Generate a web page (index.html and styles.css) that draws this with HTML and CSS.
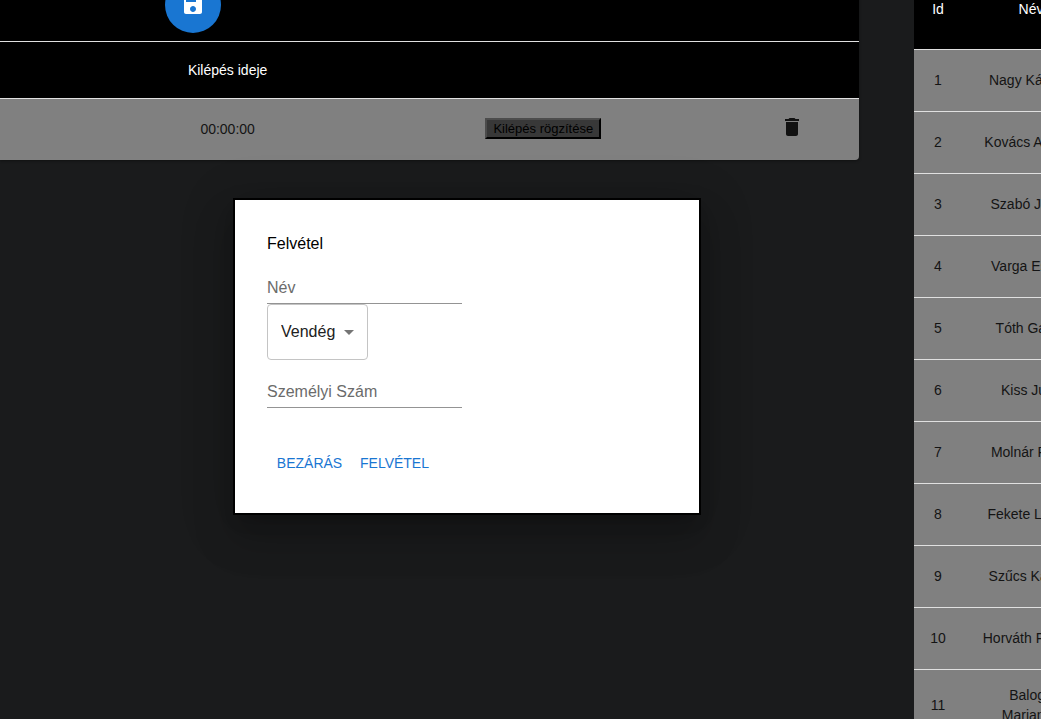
FILE: index.html
```html
<!DOCTYPE html>
<html lang="hu">
<head>
<meta charset="utf-8">
<title>Felvétel</title>
<link rel="stylesheet" href="styles.css">
</head>
<body>
<main class="page">
  <section class="visits">
    <div class="toolbar">
      <button class="fab" type="button" aria-label="Mentés">
        <svg class="icon" viewBox="0 0 24 24" aria-hidden="true"><path d="M17 3H5c-1.110 0-2 .9-2 2v14c0 1.100.890 2 2 2h14c1.100 0 2-.9 2-2V7l-4-4zm-5 16c-1.660 0-3-1.340-3-3s1.340-3 3-3 3 1.340 3 3-1.340 3-3 3zm3-10H5V5h10v4z"/></svg>
      </button>
    </div>
    <table class="table visit-table">
      <colgroup><col class="col-edge"><col class="col-time"><col class="col-action"><col class="col-delete"></colgroup>
      <thead>
        <tr><th></th><th>Kilépés ideje</th><th></th><th></th></tr>
      </thead>
      <tbody>
        <tr>
          <td></td>
          <td>00:00:00</td>
          <td><button class="record" type="button">Kilépés rögzítése</button></td>
          <td><button class="delete" type="button" aria-label="Törlés"><svg class="icon" viewBox="0 0 24 24" aria-hidden="true"><path d="M6 19c0 1.100.9 2 2 2h8c1.100 0 2-.9 2-2V7H6v12zM19 4h-3.500l-1-1h-5l-1 1H5v2h14V4z"/></svg></button></td>
        </tr>
      </tbody>
    </table>
  </section>
  <aside class="people">
    <table class="table people-table">
      <colgroup><col class="col-id"><col class="col-name"></colgroup>
      <thead><tr><th>Id</th><th>Név</th></tr></thead>
      <tbody>
        <tr><td>1</td><td>Nagy Kálmán</td></tr>
        <tr><td>2</td><td>Kovács András</td></tr>
        <tr><td>3</td><td>Szabó János</td></tr>
        <tr><td>4</td><td>Varga Eszter</td></tr>
        <tr><td>5</td><td>Tóth Gábor</td></tr>
        <tr><td>6</td><td>Kiss Judit</td></tr>
        <tr><td>7</td><td>Molnár Péter</td></tr>
        <tr><td>8</td><td>Fekete László</td></tr>
        <tr><td>9</td><td>Szűcs Katalin</td></tr>
        <tr><td>10</td><td>Horváth Ferenc</td></tr>
        <tr><td>11</td><td>Balogh<br>Marianna</td></tr>
      </tbody>
    </table>
  </aside>
</main>

<form class="dialog" role="dialog" aria-labelledby="dialog-title">
  <h2 class="dialog-title" id="dialog-title">Felvétel</h2>
  <input class="field" type="text" placeholder="Név" aria-label="Név">
  <div class="select-wrap">
    <select class="select" aria-label="Típus"><option>Vendég</option></select>
    <svg class="icon arrow" viewBox="0 0 24 24" aria-hidden="true"><path d="M7 10l5 5 5-5z"/></svg>
  </div>
  <input class="field" type="text" placeholder="Személyi Szám" aria-label="Személyi Szám">
  <div class="actions">
    <button class="text-button" type="button">BEZÁRÁS</button>
    <button class="text-button" type="button">FELVÉTEL</button>
  </div>
</form>
</body>
</html>
```

FILE: styles.css
```css
* { box-sizing: border-box; }

body {
  margin: 0;
  min-height: 100vh;
  overflow: hidden;
  background: #1a1b1c;
  font-family: "Liberation Sans", Arial, sans-serif;
  color: #141414;
}

button, input, select { font-family: inherit; }

.icon {
  display: block;
  width: 24px;
  height: 24px;
  fill: currentColor;
}

.page {
  display: flex;
  align-items: flex-start;
  gap: 55px;
  height: 100vh;
  margin-top: -31px;
}

.visits {
  flex: 1;
  border-radius: 0 0 4px 0;
  overflow: hidden;
  box-shadow: 0 1px 3px rgba(0, 0, 0, 0.4);
}

.toolbar {
  padding: 8px 165px;
  background: #000;
  border-bottom: 1px solid #e0e0e0;
}

.fab {
  display: grid;
  place-items: center;
  width: 56px;
  height: 56px;
  padding: 0;
  border: 0;
  border-radius: 50%;
  background: #1976d2;
  color: #fff;
}

.table {
  width: 100%;
  table-layout: fixed;
  border-spacing: 0;
  font-size: 14px;
  line-height: 20px;
  text-align: center;
}

.table th {
  height: 57px;
  padding: 0 16px;
  background: #000;
  color: #fff;
  font-weight: 400;
  border-bottom: 1px solid #e0e0e0;
}

.table td {
  height: 62px;
  padding: 15px 16px 17px;
  background: #808080;
  border-bottom: 1px solid #e0e0e0;
}

.visit-table td {
  height: 61px;
  padding: 0 16px 2px;
  border-bottom: 0;
}

.col-edge { width: 11%; }
.col-time { width: 31%; }
.col-action { width: 42.5%; }
.col-delete { width: 15.5%; }

.record {
  height: 21px;
  padding: 0 6px;
  border: 2px solid;
  border-color: #4c4c4c #000 #000 #4c4c4c;
  background: #383838;
  color: #000;
  font-size: 13px;
  line-height: 16px;
}

.delete {
  display: block;
  margin: 0 auto 4px;
  padding: 0;
  border: 0;
  background: none;
  color: #111;
}

.people {
  flex: 0 0 127px;
  overflow: hidden;
}

.people-table { width: 186px; }
.people-table th { height: 81px; }
.col-id { width: 48px; }
.col-name { width: 138px; }
.people-table th, .people-table td { white-space: nowrap; }
.people-table td:first-child { padding: 15px 0 17px; }

.dialog {
  position: absolute;
  top: 198px;
  left: 233px;
  width: 468px;
  padding: 32px;
  border: 2px solid #000;
  background: #fff;
  color: #000;
  box-shadow: 0 11px 15px -7px rgba(0, 0, 0, 0.2), 0 24px 38px 3px rgba(0, 0, 0, 0.14), 0 9px 46px 8px rgba(0, 0, 0, 0.12);
}

.dialog-title {
  margin: 0 0 16px;
  font-size: 16px;
  font-weight: 400;
  line-height: 24px;
}

.field {
  display: block;
  width: 195px;
  height: 32px;
  padding: 4px 0;
  border: 0;
  border-bottom: 1px solid #949494;
  background: none;
  font-size: 16px;
}

.field::placeholder { color: #6b6b6b; }

.select-wrap {
  position: relative;
  width: 101px;
  margin-bottom: 16px;
}

.select {
  display: block;
  width: 100%;
  height: 56px;
  padding: 0 32px 2px 13px;
  border: 1px solid #c4c4c4;
  border-radius: 4px;
  appearance: none;
  background: #fff;
  color: #212121;
  font-size: 16px;
}

.arrow {
  position: absolute;
  top: 16px;
  right: 7px;
  color: #757575;
  pointer-events: none;
}

.actions {
  display: flex;
  margin-top: 37px;
}

.text-button {
  min-width: 85px;
  height: 36px;
  padding: 6px 8px;
  border: 0;
  background: none;
  color: #1976d2;
  font-size: 14px;
  line-height: 24px;
}
```
